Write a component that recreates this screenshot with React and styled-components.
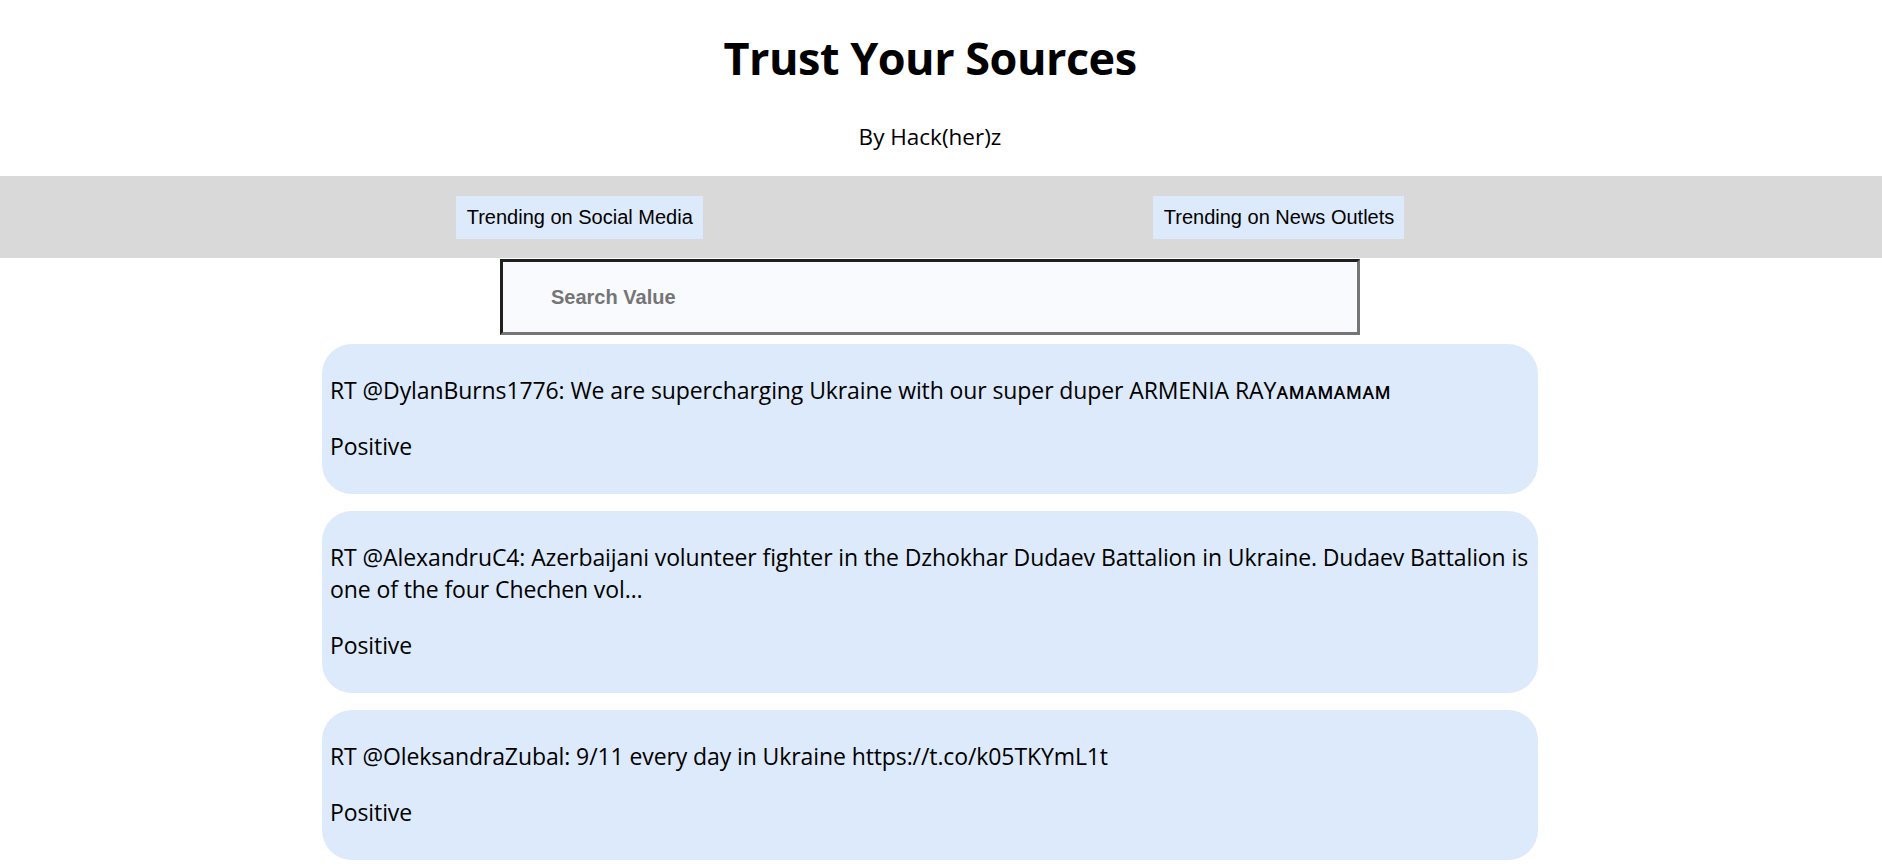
import React from "react";
import styled, { createGlobalStyle } from "styled-components";

const GlobalStyle = createGlobalStyle`
  html, body {
    margin: 0;
    padding: 0;
    background: #ffffff;
  }
  body {
    font-family: "Open Sans", "Noto Sans", sans-serif;
    color: #000000;
  }
`;

const Page = styled.div`
  display: flex;
  flex-direction: column;
`;

const Header = styled.header`
  display: flex;
  flex-direction: column;
  align-items: center;
  padding-right: 22px;
`;

const Title = styled.h1`
  margin: 26px 0 0;
  font-family: "Open Sans", "Noto Sans", sans-serif;
  font-size: 45px;
  font-weight: 700;
  line-height: 64px;
  letter-spacing: -0.5px;
`;

const Subtitle = styled.p`
  margin: 31px 0 0;
  font-size: 22.5px;
  line-height: 32px;
  padding-bottom: 23px;
`;

const NavBar = styled.nav`
  display: flex;
  justify-content: center;
  gap: 450px;
  background: #d9d9d9;
  padding: 20px 22px 19px 0;
`;

const NavButton = styled.button`
  font-family: "Liberation Sans", Arial, sans-serif;
  font-size: 20px;
  line-height: 23px;
  padding: 10px 10px 10px 11px;
  color: #000000;
  background: #ddeafb;
  border: none;
  cursor: pointer;
`;

const SearchRow = styled.div`
  display: flex;
  justify-content: center;
  padding: 1px 22px 0 0;
`;

const SearchInput = styled.input`
  box-sizing: border-box;
  width: 860px;
  height: 76px;
  padding: 0 0 0 48px;
  background: #f8fafd;
  border-style: solid;
  border-width: 3px;
  border-color: #1f1f1f #767676 #767676 #1f1f1f;
  font-family: "Liberation Sans", Arial, sans-serif;
  font-size: 20px;
  font-weight: 700;
  color: #000000;
  outline: none;

  &::placeholder {
    color: #757575;
    font-weight: 700;
  }
`;

const CardList = styled.section`
  display: flex;
  flex-direction: column;
  align-items: center;
  gap: 17px;
  padding: 9px 22px 0 0;
`;

const Card = styled.article`
  width: 1200px;
  padding: 6px 8px 8px;
  background: #ddeafb;
  border-radius: 30px;
`;

const CardText = styled.p`
  margin: 24px 0;
  font-family: "Open Sans", "Noto Sans", "DejaVu Sans", sans-serif;
  font-size: 23px;
  line-height: 32px;
  letter-spacing: -0.1px;
`;

const SmallCaps = styled.span`
  font-family: "Noto Sans", "DejaVu Sans", sans-serif;
  font-weight: 400;
`;

const tweets = [
  {
    text: "RT @DylanBurns1776: We are supercharging Ukraine with our super duper ARMENIA RAY",
    tail: "ᴀᴍᴀᴍᴀᴍᴀᴍ",
    sentiment: "Positive",
  },
  {
    text: "RT @AlexandruC4: Azerbaijani volunteer fighter in the Dzhokhar Dudaev Battalion in Ukraine. Dudaev Battalion is one of the four Chechen vol…",
    sentiment: "Positive",
  },
  {
    text: "RT @OleksandraZubal: 9/11 every day in Ukraine https://t.co/k05TKYmL1t",
    sentiment: "Positive",
  },
];

export default function App() {
  return (
    <>
      <GlobalStyle />
      <Page>
        <Header>
          <Title>Trust Your Sources</Title>
          <Subtitle>By Hack(her)z</Subtitle>
        </Header>
        <NavBar>
          <NavButton type="button">Trending on Social Media</NavButton>
          <NavButton type="button">Trending on News Outlets</NavButton>
        </NavBar>
        <SearchRow>
          <SearchInput type="text" placeholder="Search Value" />
        </SearchRow>
        <CardList>
          {tweets.map((t, i) => (
            <Card key={i}>
              <CardText>
                {t.text}
                {t.tail && <SmallCaps>{t.tail}</SmallCaps>}
              </CardText>
              <CardText>{t.sentiment}</CardText>
            </Card>
          ))}
        </CardList>
      </Page>
    </>
  );
}
